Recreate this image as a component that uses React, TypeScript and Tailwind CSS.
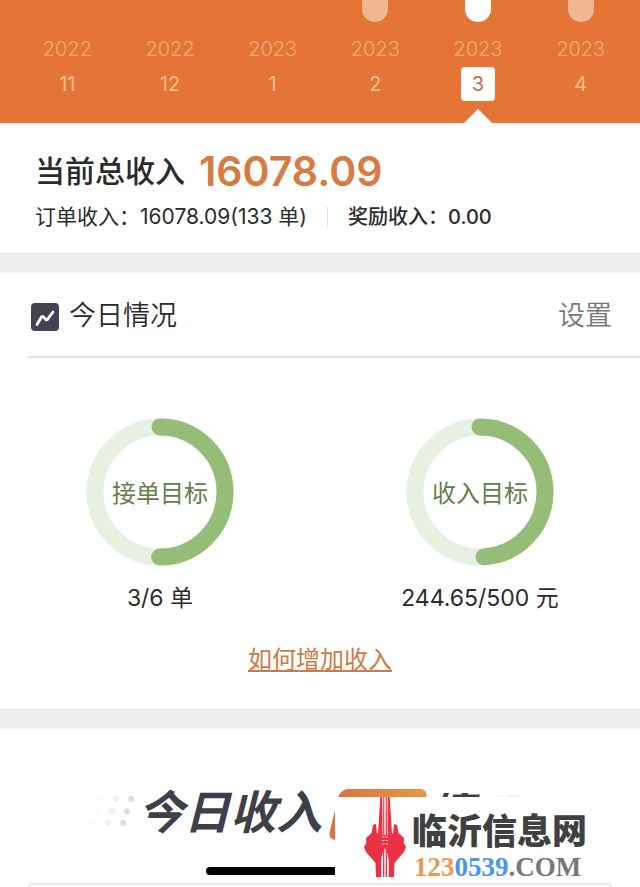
import React from 'react';

const months = [
  { year: '2022', month: '11' },
  { year: '2022', month: '12' },
  { year: '2023', month: '1' },
  { year: '2023', month: '2', bar: true },
  { year: '2023', month: '3', bar: true, active: true },
  { year: '2023', month: '4', bar: true },
];

const goals = [
  { label: '接单目标', text: '3/6 单', progress: 0.5 },
  { label: '收入目标', text: '244.65/500 元', progress: 0.489 },
];

const RADIUS = 65;
const LENGTH = 2 * Math.PI * RADIUS;

const GoalRing: React.FC<{ label: string; progress: number }> = ({ label, progress }) => (
  <div className="grid place-items-center">
    <svg className="col-start-1 row-start-1 h-[148px] w-[148px] -rotate-90" viewBox="0 0 148 148" fill="none" strokeWidth="17">
      <circle cx="74" cy="74" r={RADIUS} stroke="#e8f0e2" />
      <circle cx="74" cy="74" r={RADIUS} stroke="#96bd77" strokeLinecap="round" strokeDasharray={`${LENGTH * progress} ${LENGTH}`} />
    </svg>
    <span className="col-start-1 row-start-1 pt-1 text-2xl text-[#64804a]">{label}</span>
  </div>
);

const SiteLogo: React.FC = () => (
  <svg className="h-20 w-[42px]" viewBox="0 0 42 80" fill="#ec3044">
    {/* right half is the left one mirrored */}
    {['', 'translate(42 0) scale(-1 1)'].map((transform) => (
      <g key={transform} transform={transform}>
        <path d="M16.300 0h1.900L18.500 38v12l2.500.500C18.500 55 17.300 60 17.200 66v14H12l-.5-14L2 55 0 50l2.300-4L2 41l5.500-5L9 28l3-1 .800 8.500 1.200 1.500z" />
        <path d="M19.200 0h1.100v80h-1.300z" />
        <path d="M17 38h4v13l-3.500 3z" />
        <path d="M18 40h3M18 43.500h3M18 47h3" stroke="#fff" strokeWidth="1.200" strokeDasharray="1.600 1" />
      </g>
    ))}
  </svg>
);

const App: React.FC = () => {
  return (
    <div className="relative overflow-hidden bg-white font-['Inter','Noto_Sans_CJK_SC',sans-serif] text-[#2b2b2b]">
      {/* Month picker */}
      <header className="grid grid-cols-6 bg-[#e57437] pr-2 pl-4">
        {months.map(({ year, month, bar, active }) => (
          <button key={`${year}-${month}`} type="button" className="flex h-[123px] flex-col items-center text-xl">
            <span className={`h-[22px] w-[26px] rounded-b-full ${active ? 'bg-white' : bar ? 'bg-[#f0b890]' : ''}`} />
            <span className="mt-[13px] leading-7 font-light text-[#f3aa74]">{year}</span>
            <span className={`mt-1 h-[34px] w-[34px] rounded leading-[34px] ${active ? 'bg-white text-[#c0713f]' : 'text-[#f7bf90]'}`}>{month}</span>
            {active && <span className="mt-auto border-x-[14px] border-b-[14px] border-x-transparent border-b-white" />}
          </button>
        ))}
      </header>

      {/* Income summary */}
      <section className="px-[35px] pt-6 pb-[14px]">
        <h1 className="flex items-center gap-3.5 text-[30px] leading-[48px] font-medium">
          当前总收入
          <span className="text-[41px] font-semibold text-[#d67b41]">16078.09</span>
        </h1>
        <div className="flex items-center leading-[44px]">
          <span className="text-[21px]">订单收入：16078.09(133 单)</span>
          <span className="mx-5 h-5 w-px bg-[#dcdcdc]" />
          <span className="text-xl font-medium">奖励收入：0.00</span>
        </div>
      </section>
      <div className="h-5 bg-[#eeeff1]" />

      {/* Today */}
      <section>
        <div className="ml-7 flex h-[85px] items-center gap-2.5 border-b-2 border-[#e4e4e4] pt-1 pr-7 pl-[3px]">
          <svg className="h-7 w-7" viewBox="0 0 28 28" fill="none">
            <rect width="28" height="28" rx="4" fill="#434252" />
            <path d="M6 21.500L10.500 14c.5-.8 1-.9 1.700-.3l2.300 2.700c.7.700 1.500.700 2.100-.200L22 9" stroke="#fff" strokeWidth="2.800" strokeLinecap="round" strokeLinejoin="round" />
          </svg>
          <h2 className="flex-1 text-[27px] font-[350]">今日情况</h2>
          <button type="button" className="text-[27px] font-[350] text-[#777]">设置</button>
        </div>
        <div className="grid grid-cols-2 pt-[60px]">
          {goals.map(({ label, text, progress }) => (
            <div key={label} className="flex flex-col items-center">
              <GoalRing label={label} progress={progress} />
              <p className="mt-3 text-[23px] leading-10">{text}</p>
            </div>
          ))}
        </div>
        <p className="flex justify-center pt-[22px] pb-[29px]">
          <a href="#" className="text-2xl leading-10 text-[#cd7b45] underline decoration-2 underline-offset-2">如何增加收入</a>
        </p>
      </section>
      <div className="h-5 bg-[#eeeff1]" />

      {/* Income banner */}
      <section className="px-7 pt-14">
        <div className="flex h-[98px] items-start">
          <svg className="mt-1.5 ml-10 h-10 w-[70px] shrink-0" viewBox="0 0 70 40" fill="#d9d9d9">
            {[0, 1, 2].map((row) =>
              [0, 1, 2, 3].map((col) => (
                <circle key={`${row}-${col}`} cx={18 + col * 15 - row * 4} cy={8 + row * 12} r="3" opacity={col * col * 0.1} />
              ))
            )}
          </svg>
          <h2 className="text-[46px] leading-[54px] font-bold whitespace-nowrap text-[#3d404b] italic">今日收入</h2>
          <span className="mt-1 ml-3 h-[51px] w-[88px] shrink-0 -skew-x-[14deg] rounded-lg bg-linear-to-r from-[#dd7440] to-[#e09a45]" />
          <svg className="mt-2 ml-4 h-4 w-[84px] shrink-0" viewBox="0 0 84 16" fill="#3d404b">
            <path d="M6 0h5L5 16H0z M24 0h6l-.5 1.500H42l-1.200 4H14l1.200-4h8z" />
            <path d="M58 2h8l-2 4h-8z M70 2h12l-1 4H69z" fill="#f4f4f4" />
          </svg>
        </div>
        <div className="h-1 rounded-t-lg border-2 border-b-0 border-[#e8e8e8]" />
      </section>
      <div className="absolute bottom-3 left-[206px] h-2 w-[228px] rounded-full bg-black" />

      {/* Site badge */}
      <div className="absolute right-12 bottom-1 flex h-[86px] w-[257px] items-start bg-white pl-[29px]">
        <SiteLogo />
        <div className="ml-1.5 pt-3.5 whitespace-nowrap">
          <p className="text-[35px] leading-10 font-black text-[#404040]">临沂信息网</p>
          <p className="pl-0.5 font-['Liberation_Serif',serif] text-[27px] leading-8 font-bold text-[#777]">
            <span className="text-[#f5964f]">123</span>
            <span className="text-[#4a94f0]">0539</span>.COM
          </p>
        </div>
      </div>
    </div>
  );
};

export default App;
